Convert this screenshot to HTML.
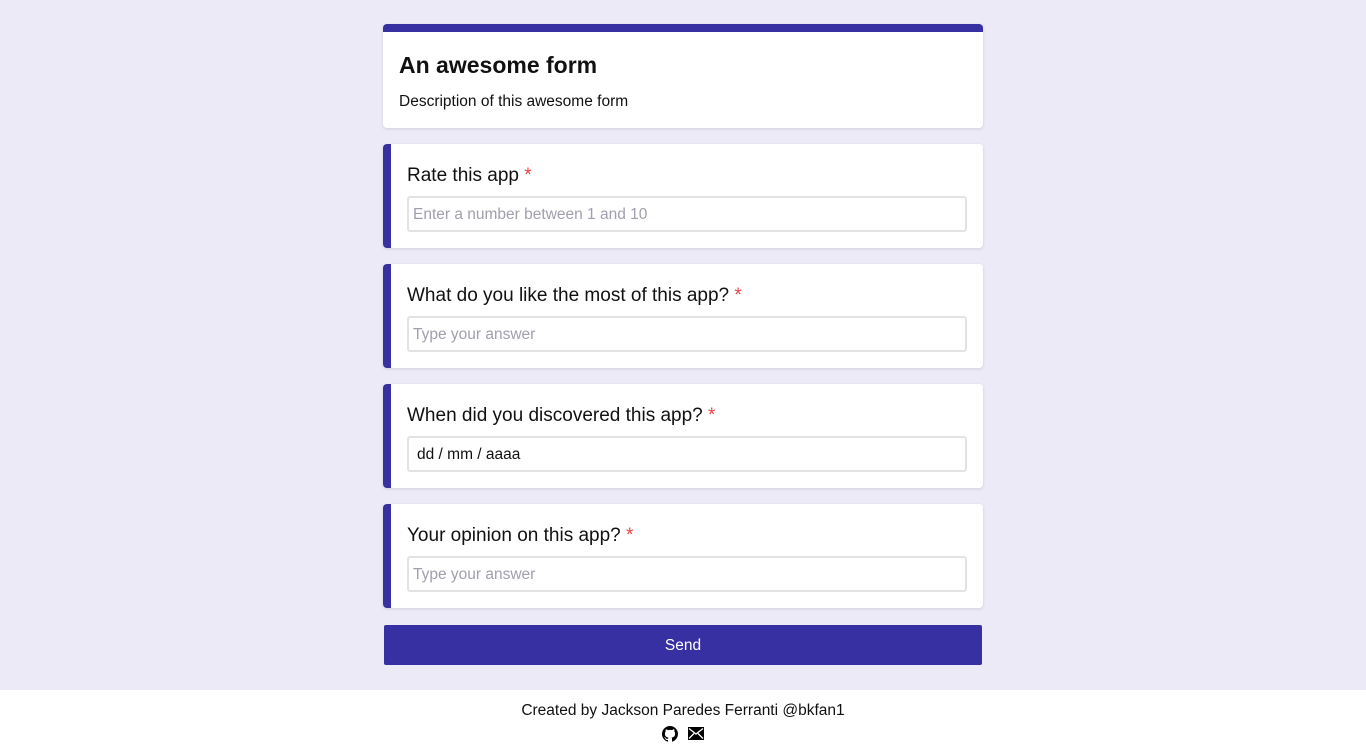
<!DOCTYPE html>
<html><head><meta charset="utf-8"><style>
*{box-sizing:border-box;margin:0;padding:0}
body{width:1366px;height:754px;background:#edeaf7;font-family:"Liberation Sans",sans-serif;color:#111;position:relative;overflow:hidden}
.card{position:absolute;left:383px;width:600px;background:#fff;border-radius:4px;box-shadow:0 1px 3px rgba(0,0,0,.12)}
.head{top:24px;height:104px;border-top:8px solid #3730a3}
.head h1{position:absolute;left:16px;top:20px;font-size:23px;font-weight:bold}
.head p{position:absolute;left:16px;top:61px;font-size:15.5px}
.q{height:104px;border-left:8px solid #3730a3}
.q .l{position:absolute;left:16px;top:21px;font-size:19px}
.q .l span{color:#ef4444}
.q .i{position:absolute;left:16px;top:52px;width:560px;height:36px;border:2px solid #e3e3e6;border-radius:3px;font-size:15.5px;color:#a0a0ad;padding:8px 4px}
.btn{position:absolute;left:384px;top:625px;width:598px;height:40px;background:#3730a3;color:#fff;font-size:15.5px;text-align:center;line-height:41px;border-radius:2px}
.foot{position:absolute;left:0;top:690px;width:1366px;height:64px;background:#fff;text-align:center;font-size:15.5px}
</style></head><body>
<div class="card head"><h1>An awesome form</h1><p>Description of this awesome form</p></div>
<div class="card q" style="top:144px"><div class="l">Rate this app <span>*</span></div><div class="i">Enter a number between 1 and 10</div></div>
<div class="card q" style="top:264px"><div class="l">What do you like the most of this app? <span>*</span></div><div class="i">Type your answer</div></div>
<div class="card q" style="top:384px"><div class="l">When did you discovered this app? <span>*</span></div><div class="i" style="color:#111;padding-left:8px">dd / mm / aaaa</div></div>
<div class="card q" style="top:504px"><div class="l">Your opinion on this app? <span>*</span></div><div class="i">Type your answer</div></div>
<div class="btn">Send</div>
<div class="foot"><div style="margin-top:12px">Created by Jackson Paredes Ferranti @bkfan1</div>
<div style="margin-top:5px">
<svg width="16" height="16" viewBox="0 0 16 16" style="vertical-align:middle"><path fill="#000" d="M8 0C3.58 0 0 3.580 0 8c0 3.54 2.29 6.53 5.47 7.590.4.07.55-.17.55-.38v-1.33c-2.23.49-2.7-1.07-2.7-1.070-.36-.92-.89-1.17-.89-1.17-.73-.5.05-.49.05-.49.8.06 1.23.83 1.23.83.72 1.23 1.87.87 2.33.67.07-.52.28-.87.51-1.07-1.78-.2-3.65-.89-3.65-3.95 0-.87.31-1.59.82-2.150-.08-.2-.36-1.02.08-2.12 0 0 .67-.21 2.2.82A7.6 7.6 0 0 1 8 3.86c.68 0 1.36.09 2 .27 1.53-1.04 2.2-.82 2.2-.82.44 1.1.16 1.92.08 2.12.51.56.82 1.27.82 2.15 0 3.07-1.87 3.75-3.65 3.95.29.25.54.73.54 1.48v2.2c0 .21.15.46.55.38A8 8 0 0 0 16 8c0-4.42-3.58-8-8-8z"/></svg>
<svg width="16" height="13" viewBox="0 0 16 13" style="vertical-align:middle;margin-left:6px"><rect x="0" y="0" width="16" height="13" fill="#000"/><path d="M1 1.5l7 5.5 7-5.5M1 11.5l5-5M15 11.5l-5-5" stroke="#fff" stroke-width="1.3" fill="none"/></svg>
</div></div>
</body></html>
